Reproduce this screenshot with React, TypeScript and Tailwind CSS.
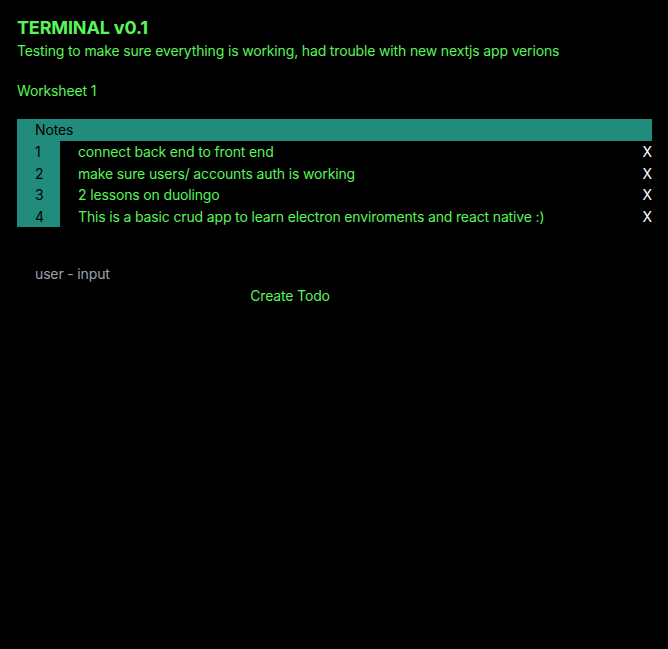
import { useState } from 'react';

const todos = [
  { id: 1, text: 'connect back end to front end' },
  { id: 2, text: 'make sure users/ accounts auth is working' },
  { id: 3, text: '2 lessons on duolingo' },
  { id: 4, text: 'This is a basic crud app to learn electron enviroments and react native :)' },
];

export default function App() {
  const [value, setValue] = useState('');

  return (
    <div className="min-h-screen bg-black text-[#5af55a] pl-[17px] pr-4 pt-4 tracking-[-0.15px] font-['Inter','Liberation_Sans',sans-serif]">
      {/* Header */}
      <h1 className="text-[18px] leading-6 font-bold">TERMINAL v0.1</h1>
      <p className="text-sm leading-5 pt-px">
        Testing to make sure everything is working, had trouble with new nextjs app verions
      </p>
      <h2 className="text-sm leading-5 mt-5">Worksheet 1</h2>

      {/* Notes table */}
      <table className="w-full mt-[18px] text-sm border-collapse">
        <thead>
          <tr className="bg-[#218c7c] text-black">
            <th colSpan={3} className="h-[22px] p-0 text-left font-normal pl-[18px] leading-[22px]">Notes</th>
          </tr>
        </thead>
        <tbody>
          {todos.map((todo) => (
            <tr key={todo.id}>
              <td className="h-[21.5px] p-0 bg-[#218c7c] text-black w-[43px] pl-[18px] leading-[21.5px]">{todo.id}</td>
              <td className="h-[21.5px] p-0 pl-[18px] leading-[21.5px]">{todo.text}</td>
              <td className="h-[21.5px] p-0 text-white text-right w-[30px] leading-[21.5px]">X</td>
            </tr>
          ))}
        </tbody>
      </table>

      {/* Form */}
      <div className="w-[546px] mt-[37px] flex flex-col">
        <input
          value={value}
          onChange={(e) => setValue(e.target.value)}
          placeholder="user - input"
          className="bg-transparent text-sm leading-5 pl-[18px] w-[200px] outline-none placeholder:text-[#9ca3af] text-[#5af55a]"
        />
        <button className="self-center mt-0.5 text-sm leading-5 text-[#5af55a]">Create Todo</button>
      </div>
    </div>
  );
}
